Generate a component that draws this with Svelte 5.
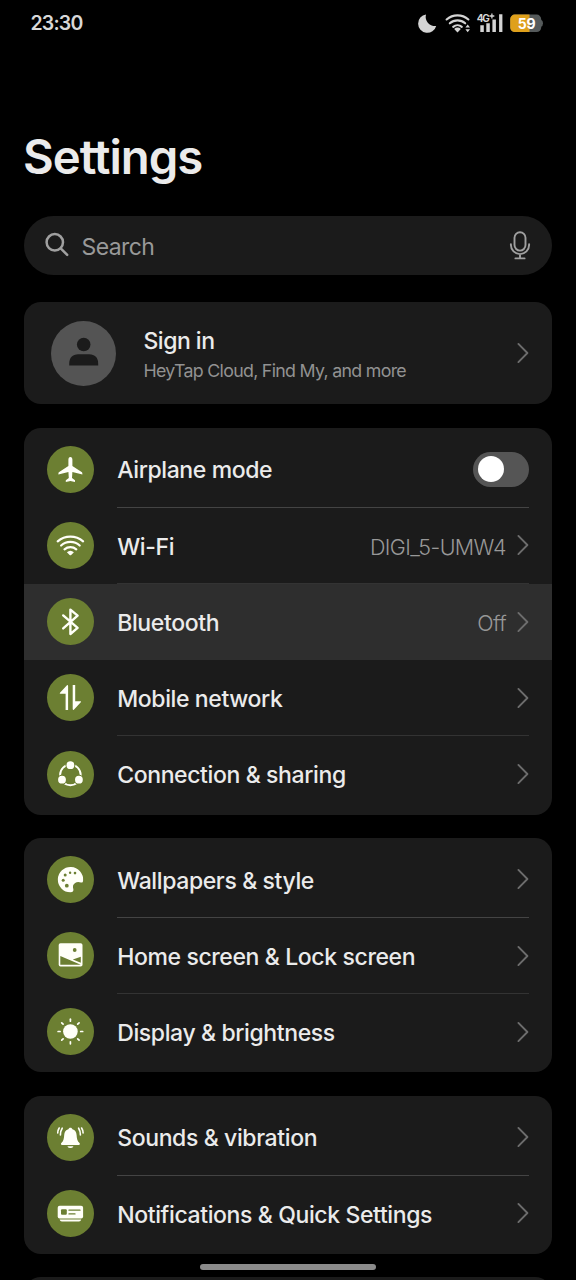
<script>
  const groups = [
    [
      { icon: 'plane', label: 'Airplane mode', toggle: true },
      { icon: 'wifi', label: 'Wi-Fi', value: 'DIGI_5-UMW4' },
      { icon: 'bluetooth', label: 'Bluetooth', value: 'Off', active: true },
      { icon: 'mobile', label: 'Mobile network' },
      { icon: 'share', label: 'Connection & sharing' }
    ],
    [
      { icon: 'palette', label: 'Wallpapers & style' },
      { icon: 'picture', label: 'Home screen & Lock screen' },
      { icon: 'sun', label: 'Display & brightness' }
    ],
    [
      { icon: 'bell', label: 'Sounds & vibration' },
      { icon: 'panel', label: 'Notifications & Quick Settings' }
    ]
  ];
  const rays = [0, 45, 90, 135, 180, 225, 270, 315];
</script>

{#snippet chevron()}
  <svg class="chevron" width="14" height="22" viewBox="0 0 14 22"><path d="M3.400 1.900 12.400 11 3.400 20.100" /></svg>
{/snippet}

{#snippet glyph(name)}
  <svg class="glyph" width="47" height="47" viewBox="0 0 47 47">
    {#if name === 'plane'}
      <path class="fill" d="M23.4 11c1.3 0 2 1.2 2 2.8v6.1l9.2 6.2c.6.4.8 1 .8 2.4l-10-2.600-.4 6 3 2.400v1.800l-4.600-1.200-4.600 1.200v-1.800l3-2.400-.4-6-10 2.600c0-1.400.2-2 .8-2.400l9.200-6.200v-6.100c0-1.600.7-2.800 2-2.800Z" />
    {:else if name === 'wifi'}
      <g class="line">
        <path d="M10.700 19.400a19.500 19.500 0 0 1 25.400 0" />
        <path d="M14.100 23.500a14 14 0 0 1 18.600 0" />
        <path d="M17.500 27.300a9 9 0 0 1 11.800 0" />
      </g>
      <path class="fill" d="M19.900 30.200a5.300 5.300 0 0 1 7 0l-2.700 2.800q-.8.700-1.600 0Z" />
    {:else if name === 'bluetooth'}
      <path class="line bt" d="M16.200 17.400 30.600 29.900 23.400 36V11.600l7.200 6.100-14.400 12.700" />
    {:else if name === 'mobile'}
      <path class="fill" d="M20.200 11q.9 0 .9.900V36h-2.500V19.700h-5.200q-1.200-.1-.4-1Z" />
      <path class="fill" d="M26.600 36q-.9 0-.9-.900V11h2.500v16.300h5.200q1.200.1.400 1Z" />
    {:else if name === 'share'}
      <circle class="line ring" cx="23.400" cy="23.900" r="10.300" />
      <circle class="gap" cx="23.400" cy="14.200" r="4.900" />
      <circle class="gap" cx="15" cy="28.700" r="4.900" />
      <circle class="gap" cx="31.900" cy="28.700" r="4.900" />
      <circle class="fill" cx="23.400" cy="14.200" r="3.900" />
      <circle class="fill" cx="15" cy="28.700" r="3.900" />
      <circle class="fill" cx="31.900" cy="28.700" r="3.900" />
    {:else if name === 'palette'}
      <path class="fill" d="M36.100 24.600c0 1.600-.8 2.300-2.100 1.900-2-.7-4.200-.7-5.900.4-2.200 1.400-2.500 3.500-1.900 5.600.7 2.400-.1 3.800-2.800 3.800A12.650 12.650 0 1 1 36.100 24.600Z" />
      <g class="dot">
        <circle cx="18.200" cy="19" r="1.500" /><circle cx="23.100" cy="16.800" r="1.200" />
        <circle cx="28" cy="17.100" r="1.300" /><circle cx="16.200" cy="24.200" r="1.500" />
        <circle cx="19.800" cy="29.700" r="1.900" />
      </g>
    {:else if name === 'picture'}
      <rect class="fill" x="11.700" y="11.300" width="23.800" height="23.300" rx="1.800" />
      <path class="cut" d="M13.300 24.100 33.800 32.800H13.300ZM25.800 27.400 33.800 24.700V30.700Z" />
      <circle class="dot" cx="27.700" cy="18" r="1.900" />
    {:else if name === 'sun'}
      <circle class="fill" cx="23.400" cy="23.500" r="7.300" />
      {#each rays as a}
        <path class="line ray" d="M23.400 13.200v-2" transform="rotate({a} 23.400 23.500)" />
      {/each}
    {:else if name === 'bell'}
      <path class="fill" d="M23.400 13.700c1 0 1.800.7 2 1.600 2.700.8 4 2.900 4.200 5.700.2 3.200.6 6 2.900 8.100.8.800.4 1.900-.8 1.900H15.100c-1.200 0-1.600-1.100-.8-1.900 2.300-2.100 2.700-4.900 2.900-8.100.2-2.800 1.500-4.900 4.200-5.700.2-.9 1-1.600 2-1.600Z" />
      <path class="fill" d="M20.300 32.200h6.200q-1 1.900-3.100 1.900t-3.100-1.900Z" />
      <path class="line wave" d="M15.200 14.200q-1.900 3-1.800 6.700M12.200 14q-1.500 2.300-1.500 5M31.600 14.200q1.900 3 1.800 6.700M34.600 14q1.500 2.300 1.500 5" />
    {:else}
      <rect class="fill" x="10.700" y="15.700" width="25.400" height="12.700" rx="2" />
      <rect class="dot" x="14" y="19.300" width="5.800" height="5.400" rx="1" />
      <path class="rule" d="M22 20.200h11M22 23.900h6" />
      <path class="fill" d="M12.600 29.500h21.600q-.4 2.100-2.200 2.100H14.800q-1.800 0-2.200-2.100Z" />
    {/if}
  </svg>
{/snippet}

<div class="screen">
  <header class="status">
    <span class="time">23:30</span>
    <div class="tray">
      <svg width="126" height="24" viewBox="418 11 126 24">
        <path class="s" d="M426 14.500a9.200 9.200 0 1 0 10.200 11.500A9.200 9.200 0 0 1 426 14.500Z" />
        <g class="sl">
          <path d="M446.600 19.500a16.400 16.400 0 0 1 21.800 0" />
          <path d="M449.800 23.300a11.500 11.500 0 0 1 15.400 0" />
          <path d="M453.200 26.900a6.500 6.500 0 0 1 8.600 0" />
        </g>
        <path class="s" d="M454.200 29a4.500 4.500 0 0 1 6.600 0l-3.300 3.600Z" />
        <path class="s" d="m467.700 24.600 2.300 3h-4.600ZM467.700 32.300l-2.300-3h4.600Z" />
        <text class="net" x="476.800" y="21.600">4G</text>
        <path class="plus" d="M491.900 13.600v4.800M489.500 16h4.800" />
        <path class="s" d="M480.300 25.300h3.500V32h-3.500ZM486.300 23.300h3.500V32h-3.500ZM492.400 19.600h3.500V32h-3.500ZM499.100 14.200h3.300V32h-3.300Z" />
        <rect x="510.200" y="14.600" width="31" height="17.500" rx="4.600" fill="#555a5b" />
        <path d="M514.800 14.600H529.500V32.100H514.800a4.600 4.600 0 0 1-4.600-4.600V19.200a4.600 4.600 0 0 1 4.600-4.600Z" fill="#dfa01b" />
        <path d="M541 19.800q2 .6 2 3.500t-2 3.500Z" fill="#555a5b" />
        <text class="pct" x="517.800" y="28.600">59</text>
      </svg>
    </div>
  </header>

  <h1>Settings</h1>

  <div class="search">
    <svg width="26" height="26" viewBox="0 0 26 26"><circle cx="9.800" cy="10.300" r="8.200" /><path d="m15.700 16.300 6.500 6.500" /></svg>
    <span>Search</span>
    <svg class="mic" width="22" height="30" viewBox="0 0 22 30"><rect x="5.500" y="2.200" width="11" height="18.400" rx="5.500" /><path d="M1.900 14.200v.8a9.100 9.100 0 0 0 18.200 0v-.8M11 24.100v4.300M6.400 28.400h9.200" /></svg>
  </div>

  <section class="card account">
    <svg class="avatar" width="65" height="65" viewBox="0 0 65 65">
      <circle cx="32.500" cy="32.500" r="32.500" fill="#545454" />
      <circle cx="32.700" cy="23.500" r="6.800" fill="#1b1b1b" />
      <path d="M18.200 44.500v-1.800c0-6 3.300-9.400 9-9.400h11c5.700 0 9 3.400 9 9.400v1.800Z" fill="#1b1b1b" />
    </svg>
    <div class="who">
      <strong>Sign in</strong>
      <small>HeyTap Cloud, Find My, and more</small>
    </div>
    {@render chevron()}
  </section>

  {#each groups as rows}
    <section class="card list">
      {#each rows as row}
        <div class="row" class:active={row.active}>
          {@render glyph(row.icon)}
          <div class="body">
            <span class="label">{row.label}</span>
            {#if row.toggle}
              <span class="toggle"><i></i></span>
            {:else}
              {#if row.value}<span class="value">{row.value}</span>{/if}
              {@render chevron()}
            {/if}
          </div>
        </div>
      {/each}
    </section>
  {/each}
  <section class="card next"></section>
  <div class="home"></div>
</div>

<style>
  :global(body) { background: #000; }
  .screen {
    position: relative; box-sizing: border-box; width: 576px; height: 1280px; padding: 0 24px;
    overflow: hidden; background: #000; color: #ebebeb;
    font-family: Inter, "Liberation Sans", sans-serif;
  }
  .status { display: flex; justify-content: space-between; align-items: center; height: 46px; padding: 0 8px 0 6.500px; }
  .time { font-size: 19.5px; font-weight: 600; letter-spacing: -0.8px; color: #d8d8d8; }
  .tray svg { display: block; }
  .s { fill: #d4d4d4; }
  .sl { fill: none; stroke: #d4d4d4; stroke-width: 2.100; stroke-linecap: round; }
  .net { font-size: 10px; font-weight: 700; fill: #d4d4d4; letter-spacing: -1.200px; }
  .plus { fill: none; stroke: #d4d4d4; stroke-width: 1.300; }
  .pct { font-size: 14px; font-weight: 700; fill: #fff; letter-spacing: -0.200px; }
  h1 { margin: 81px 0 0 -1px; height: 89px; line-height: 60px; font-size: 47.300px; font-weight: 600; letter-spacing: -1.050px; }
  .search {
    display: flex; align-items: center; box-sizing: border-box; height: 58.500px; padding: 0 21px;
    border-radius: 30px; background: #1b1b1b; color: #999;
  }
  .search svg { fill: none; stroke: #a0a0a0; stroke-width: 2.500; stroke-linecap: round; }
  .search span { flex: 1; padding: 3px 0 0 10.500px; font-size: 23px; letter-spacing: -0.6px; }
  .search svg.mic { stroke-width: 1.900; }
  .card { background: #1b1b1b; border-radius: 17px; }
  .account { display: flex; align-items: center; box-sizing: border-box; height: 102px; margin: 27.500px 0 24px; padding: 0 23px 0 27px; }
  .who { display: flex; flex-direction: column; flex: 1; padding: 5.500px 0 0 27.500px; }
  .who strong { font-size: 23px; line-height: 30px; font-weight: 450; letter-spacing: -0.500px; }
  .who small { font-size: 17.800px; line-height: 29px; color: #929292; letter-spacing: -0.700px; font-weight: 400; }
  .chevron { flex: none; fill: none; stroke: #6d6d6d; stroke-width: 1.900; stroke-linecap: round; stroke-linejoin: round; }
  .list { padding: 3.100px 0 2.300px; margin-bottom: 23.600px; }
  .row { display: flex; align-items: center; height: 76.250px; padding: 0 23px; }
  .active { background: #2e2e2e; }
  .glyph { flex: none; border-radius: 50%; background: #6c7f32; }
  .fill { fill: #fffff8; }
  .line { fill: none; stroke: #fffff8; stroke-width: 2.200; stroke-linecap: round; }
  .bt { stroke-width: 2.400; stroke-linejoin: round; }
  .ring { stroke-width: 1.900; }
  .ray { stroke-width: 1.700; }
  .wave { stroke-width: 1.600; }
  .gap, .dot, .cut { fill: #6c7f32; }
  .rule { stroke: #6c7f32; stroke-width: 1.300; stroke-linecap: round; }
  .body { display: flex; align-items: center; flex: 1; height: 100%; margin: 0 0 -0.800px 23.200px; box-sizing: border-box; border-bottom: 1px solid #333; }
  .row:first-child .body { border-color: #444; }
  .active .body, .row:last-child .body { border-color: transparent; }
  .label { flex: 1; padding-top: 2.600px; font-size: 23px; font-weight: 450; letter-spacing: -0.380px; }
  .value { padding: 2.600px 9px 0 0; font-size: 21.500px; font-weight: 350; color: #989898; letter-spacing: -0.600px; }
  .toggle { box-sizing: border-box; width: 56px; height: 35px; padding: 4.500px; border-radius: 18px; background: #555; }
  .toggle i { display: block; width: 26px; height: 26px; border-radius: 50%; background: #fff; }
  .next { height: 80px; }
  .home { position: absolute; left: 200px; top: 1264px; width: 176px; height: 6px; border-radius: 3px; background: #8b8b8b; }
</style>
